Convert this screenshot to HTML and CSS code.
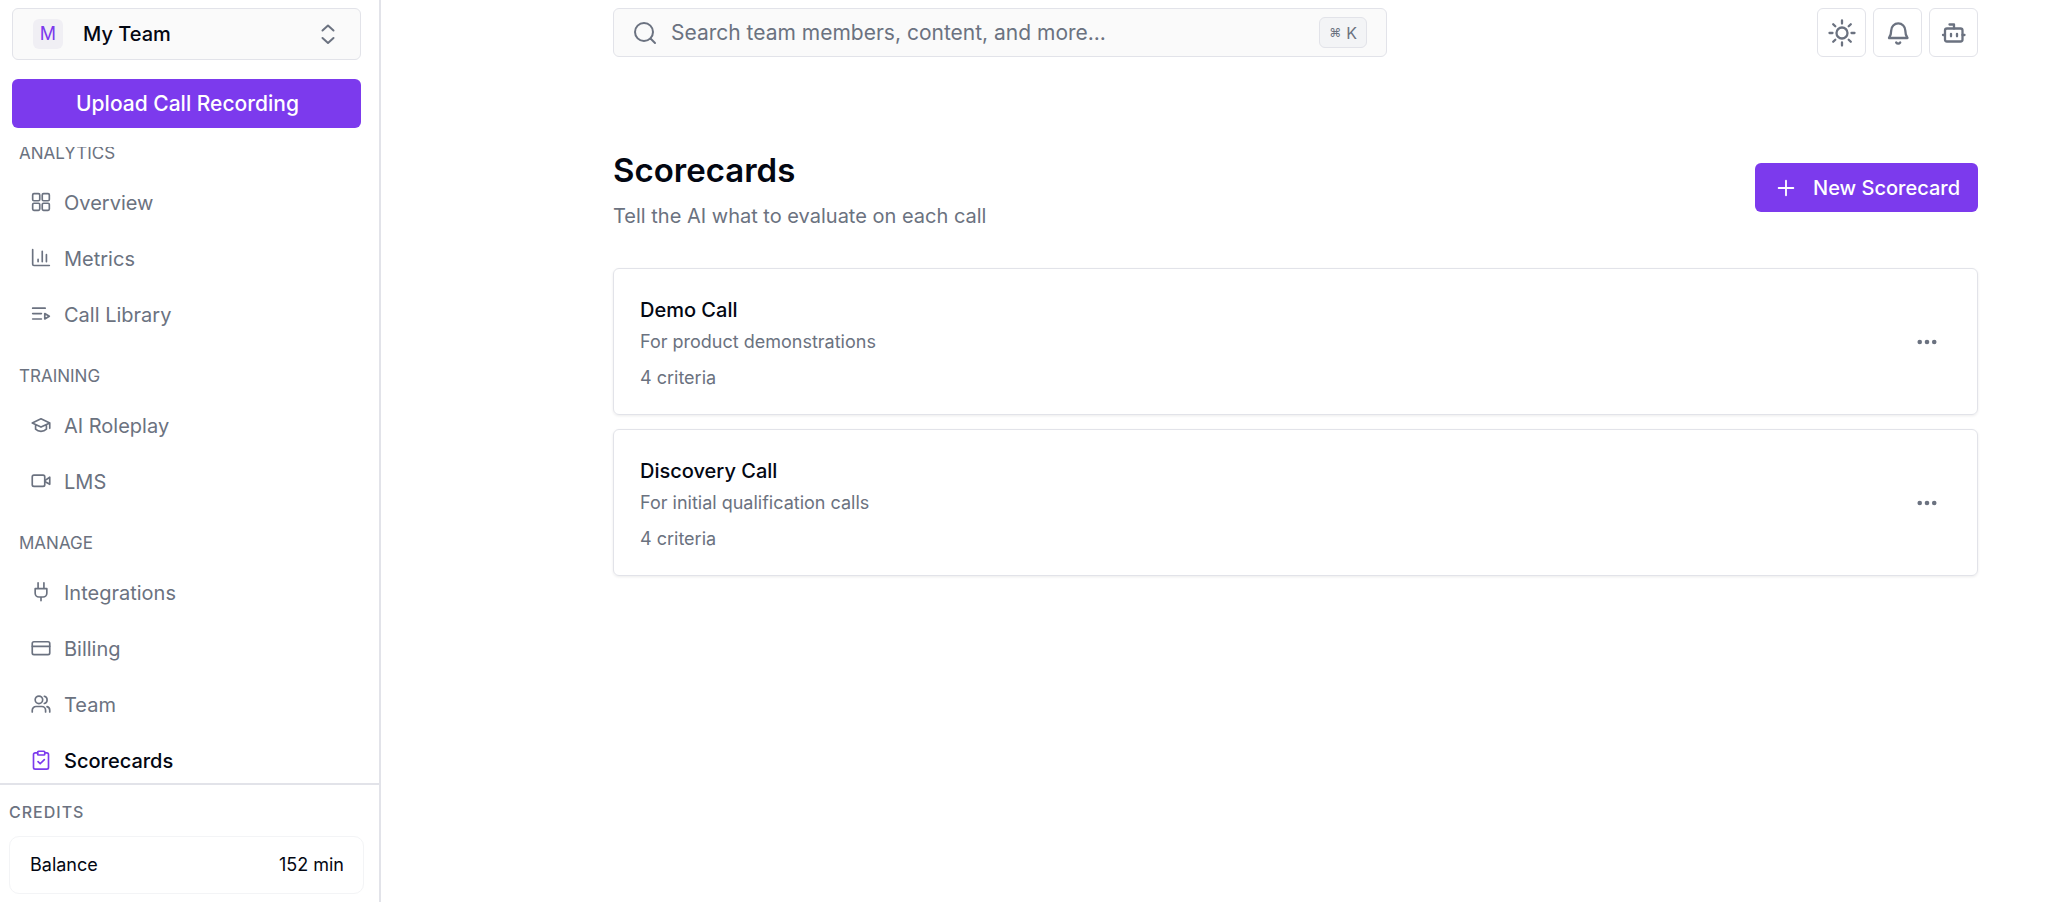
FILE: index.html
```html
<!DOCTYPE html>
<html lang="en">
<head>
<meta charset="utf-8">
<meta name="viewport" content="width=device-width, initial-scale=1">
<title>Scorecards</title>
<link rel="stylesheet" href="styles.css">
</head>
<body>
<div class="app">
  <aside class="sidebar">
    <div class="sidebar-top">
      <label class="team">
        <span class="team-badge" aria-hidden="true">M</span>
        <select class="team-select" aria-label="Team"><option>My Team</option></select>
        <svg class="icon team-arrows" viewBox="0 0 24 24"><path d="m6.500 16 5.500 5 5.500-5M6.500 8.500 12 3.500l5.500 5"/></svg>
      </label>
      <button class="btn btn-block" type="button">Upload Call Recording</button>
    </div>
    <nav class="nav" aria-label="Main">
      <div class="nav-scroll">
        <h2 class="nav-label">ANALYTICS</h2>
        <a class="nav-item" href="#overview"><svg class="icon" viewBox="0 0 24 24"><rect x="2" y="2" width="8.500" height="8.500" rx="1.500"/><rect x="13.500" y="2" width="8.500" height="8.500" rx="1.500"/><rect x="2" y="13.500" width="8.500" height="8.500" rx="1.500"/><rect x="13.500" y="13.500" width="8.500" height="8.500" rx="1.500"/></svg>Overview</a>
        <a class="nav-item" href="#metrics"><svg class="icon" viewBox="0 0 24 24"><path d="M2 2v17.500a1.500 1.500 0 0 0 1.500 1.500H22M8.500 16.500v-3M13.500 16.500V4M18.500 16.500V8"/></svg>Metrics</a>
        <a class="nav-item" href="#calls"><svg class="icon" viewBox="0 0 24 24"><path d="M2 5h15M2 11.500h10.500M2 18h10.500M16.500 11.500v6.500l5.500-3.250z"/></svg>Call Library</a>
        <h2 class="nav-label">TRAINING</h2>
        <a class="nav-item" href="#roleplay"><svg class="icon" viewBox="0 0 24 24"><path d="M1.500 9.500 12 4.500l10.500 5L12 14.500zM22.500 9.500v6.500M5.500 12v5c3.500 3.500 9.500 3.500 13 0v-5"/></svg>AI Roleplay</a>
        <a class="nav-item" href="#lms"><svg class="icon" viewBox="0 0 24 24"><rect x="1.500" y="5" width="15" height="13.500" rx="2"/><path d="m16.500 11.500 6-4v8.500l-6-3.500"/></svg>LMS</a>
        <h2 class="nav-label">MANAGE</h2>
        <a class="nav-item" href="#integrations"><svg class="icon" viewBox="0 0 24 24"><path d="M12 22.500V18M8.500 8V1M15.500 8V1M5 8h14v5.500a4.500 4.500 0 0 1-4.500 4.500h-5A4.500 4.500 0 0 1 5 13.500z"/></svg>Integrations</a>
        <a class="nav-item" href="#billing"><svg class="icon" viewBox="0 0 24 24"><rect x="1.500" y="4.500" width="21" height="15.500" rx="2"/><path d="M1.500 10h21"/></svg>Billing</a>
        <a class="nav-item" href="#team"><svg class="icon" viewBox="0 0 24 24"><circle cx="9.500" cy="7" r="4.500"/><path d="M1.500 21.500v-2a4.500 4.500 0 0 1 4.500-4.500h7a4.500 4.500 0 0 1 4.500 4.500v2M16 2.700a4.500 4.500 0 0 1 0 8.700M22.500 21.500v-2a4.500 4.500 0 0 0-3.300-4.300"/></svg>Team</a>
        <a class="nav-item active" href="#scorecards" aria-current="page"><svg class="icon" viewBox="0 0 24 24"><rect x="8" y="1.500" width="8.500" height="4.500" rx="1"/><path d="M16.500 3.500h2.500a2 2 0 0 1 2 2V21a2 2 0 0 1-2 2H5a2 2 0 0 1-2-2V5.500a2 2 0 0 1 2-2h3M8.500 14l2.500 2.500 5-5"/></svg>Scorecards</a>
      </div>
    </nav>
    <section class="credits">
      <h2 class="credits-label">CREDITS</h2>
      <div class="balance"><span>Balance</span><span>152 min</span></div>
    </section>
  </aside>
  <main class="main">
    <header class="topbar">
      <label class="search">
        <svg class="icon" viewBox="0 0 24 24"><circle cx="11" cy="11" r="9"/><path d="m22 22-4.500-4.500"/></svg>
        <input class="search-input" type="search" placeholder="Search team members, content, and more..." aria-label="Search">
        <kbd class="kbd"><span class="kbd-cmd">⌘</span>K</kbd>
      </label>
      <div class="tools">
        <button class="tool" type="button" aria-label="Toggle theme"><svg class="icon icon-lg" viewBox="0 0 28 28"><circle cx="14" cy="14" r="5.500"/><path d="M14 1.500v3M14 23.500v3M1.500 14h3M23.500 14h3M5.200 5.200l2.100 2.100M20.700 20.700l2.100 2.100M5.200 22.800l2.100-2.100M20.700 7.300l2.100-2.100"/></svg></button>
        <button class="tool" type="button" aria-label="Notifications"><svg class="icon icon-lg" viewBox="0 0 28 28"><path d="M5 19h18.500c-1.500-2-2.200-4-2.200-7.500a7 7 0 0 0-14.100 0C7.200 15 6.500 17 5 19zM12.200 23.500c1 1.500 3 1.500 4 0"/></svg></button>
        <button class="tool" type="button" aria-label="Assistant"><svg class="icon icon-lg" viewBox="0 0 28 28"><rect x="5" y="9.500" width="17.500" height="13" rx="2"/><path d="M9.500 5.500H14v4M3 16h2M22.500 16h2M11 14.800v2.500M17 14.800v2.500"/></svg></button>
      </div>
    </header>
    <div class="page-head">
      <div>
        <h1 class="title">Scorecards</h1>
        <p class="subtitle">Tell the AI what to evaluate on each call</p>
      </div>
      <button class="btn btn-new" type="button"><svg class="icon plus" viewBox="0 0 24 24"><path d="M12 4v16M4 12h16"/></svg>New Scorecard</button>
    </div>
    <div class="cards">
      <article class="card">
        <div>
          <h2 class="card-title">Demo Call</h2>
          <p class="card-text">For product demonstrations</p>
          <p class="card-text card-meta">4 criteria</p>
        </div>
        <button class="more" type="button" aria-label="Demo Call options"><svg class="dots" viewBox="0 0 24 24"><circle cx="4.750" cy="12" r="2.300"/><circle cx="12" cy="12" r="2.300"/><circle cx="19.250" cy="12" r="2.300"/></svg></button>
      </article>
      <article class="card">
        <div>
          <h2 class="card-title">Discovery Call</h2>
          <p class="card-text">For initial qualification calls</p>
          <p class="card-text card-meta">4 criteria</p>
        </div>
        <button class="more" type="button" aria-label="Discovery Call options"><svg class="dots" viewBox="0 0 24 24"><circle cx="4.750" cy="12" r="2.300"/><circle cx="12" cy="12" r="2.300"/><circle cx="19.250" cy="12" r="2.300"/></svg></button>
      </article>
    </div>
  </main>
</div>
</body>
</html>
```
FILE: styles.css
```css
:root {
  --ink: #030712;
  --muted: #6b7280;
  --line: #e2e3e9;
  --soft: #fafafa;
  --accent: #7c3aed;
}

*, *::before, *::after { box-sizing: border-box; }

body {
  margin: 0;
  background: #fff;
  color: var(--ink);
  font-family: Inter, "Liberation Sans", sans-serif;
  font-size: 20px;
  line-height: 28px;
}

h1, h2, p { margin: 0; font-weight: 400; }
button, input, select { font: inherit; color: inherit; }
button { cursor: pointer; }

.icon {
  width: 20px;
  height: 20px;
  flex: none;
  fill: none;
  stroke: currentColor;
  stroke-width: 2;
  stroke-linecap: round;
  stroke-linejoin: round;
}

.app { display: flex; min-height: 100vh; }

/* Sidebar */
.sidebar {
  width: 381px;
  height: 100vh;
  flex: none;
  display: flex;
  flex-direction: column;
  border-right: 2px solid var(--line);
}

.sidebar-top {
  display: flex;
  flex-direction: column;
  gap: 19px;
  padding: 8px 18px 19px 12px;
}

.team {
  display: flex;
  align-items: center;
  height: 52px;
  padding: 0 20px;
  border: 1px solid var(--line);
  border-radius: 6px;
  background: var(--soft);
}

.team-badge {
  width: 30px;
  height: 30px;
  margin-right: 20px;
  border-radius: 6px;
  background: #f0eff4;
  color: var(--accent);
  font-size: 18px;
  line-height: 30px;
  text-align: center;
}

.team-select {
  flex: 1;
  min-width: 0;
  padding: 0;
  border: 0;
  background: none;
  appearance: none;
  font-weight: 500;
}

.team-arrows { width: 24px; height: 24px; color: var(--muted); }

.btn {
  display: flex;
  align-items: center;
  justify-content: center;
  gap: 16px;
  height: 49px;
  padding: 0 18px 0 20px;
  border: 0;
  border-radius: 6px;
  background: var(--accent);
  color: #fff;
  font-weight: 500;
  white-space: nowrap;
}

.btn-block { width: 100%; font-size: 21px; }
.plus { width: 22px; height: 22px; }

.nav { flex: 1; min-height: 0; overflow: hidden; }
.nav-scroll { margin-top: -27px; }

.nav-label {
  padding: 21px 0 10px 19px;
  color: var(--muted);
  font-size: 17px;
  line-height: 24px;
}

.nav-item {
  display: flex;
  align-items: center;
  gap: 13px;
  height: 56px;
  padding-left: 31px;
  color: var(--muted);
  text-decoration: none;
}

.nav-item .icon { margin-bottom: 3px; }
.nav-item.active { color: var(--ink); font-weight: 500; }
.nav-item.active .icon { color: var(--accent); }

.credits {
  padding: 15px 15px 8px 9px;
  border-top: 2px solid var(--line);
}

.credits-label {
  color: var(--muted);
  font-size: 16px;
  line-height: 24px;
  font-weight: 500;
  letter-spacing: 1px;
}

.balance {
  display: flex;
  align-items: center;
  justify-content: space-between;
  height: 58px;
  margin-top: 12px;
  padding: 0 19px 0 20px;
  border: 1px solid #f3f4f6;
  border-radius: 10px;
  font-size: 18px;
}

/* Main column */
.main { flex: 1; min-width: 0; padding: 8px 70px 32px 232px; }

.topbar { display: flex; justify-content: space-between; gap: 24px; }

.search {
  display: flex;
  align-items: center;
  flex: 1;
  max-width: 774px;
  height: 49px;
  padding: 0 19px;
  border: 1px solid var(--line);
  border-radius: 6px;
  background: var(--soft);
  color: var(--muted);
}

.search .icon { width: 24px; height: 24px; }

.search-input {
  flex: 1;
  min-width: 0;
  margin-left: 14px;
  padding: 0;
  border: 0;
  outline: 0;
  background: none;
  font-size: 21px;
}

.search-input::placeholder { color: var(--muted); opacity: 1; }

.kbd {
  display: flex;
  align-items: center;
  gap: 5px;
  height: 31px;
  padding: 0 9px;
  border: 1px solid var(--line);
  border-radius: 6px;
  background: #f3f4f6;
  font-family: inherit;
  font-size: 16px;
}

.kbd-cmd { font-size: 12px; }

.tools { display: flex; gap: 7px; }

.tool {
  display: grid;
  place-items: center;
  width: 49px;
  height: 49px;
  padding: 0;
  border: 1px solid var(--line);
  border-radius: 6px;
  background: #fff;
  color: var(--muted);
}

.icon-lg { width: 28px; height: 28px; stroke-width: 2.3; }

.page-head {
  display: flex;
  align-items: center;
  justify-content: space-between;
  gap: 24px;
  margin-top: 88px;
}

.title { font-size: 33px; line-height: 50px; font-weight: 600; }
.subtitle { margin-top: 7px; color: var(--muted); }

.cards { display: grid; gap: 14px; margin-top: 38px; }

.card {
  display: flex;
  align-items: center;
  justify-content: space-between;
  padding: 24px 26px;
  border: 1px solid var(--line);
  border-radius: 6px;
  box-shadow: 0 1px 3px rgb(0 0 0 / 8%);
}

.card-title { font-size: 20px; font-weight: 500; line-height: 34px; }
.card-text { margin-top: 3px; color: var(--muted); font-size: 18px; line-height: 24px; }
.card-meta { margin-top: 12px; }

.more {
  display: grid;
  place-items: center;
  width: 48px;
  height: 48px;
  padding: 0;
  border: 0;
  background: none;
  color: var(--muted);
}

.dots { width: 24px; height: 24px; fill: currentColor; }
```
